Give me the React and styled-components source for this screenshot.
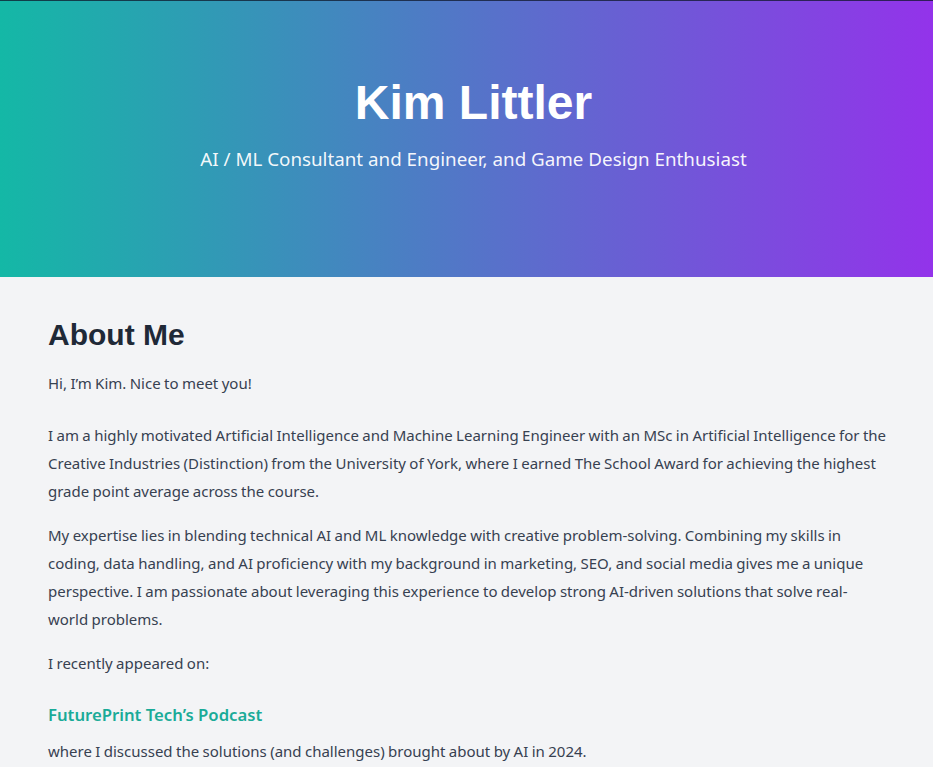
import React from 'react';
import styled, { createGlobalStyle } from 'styled-components';

const GlobalStyle = createGlobalStyle`
  html, body {
    margin: 0;
    padding: 0;
    background: #f3f4f6;
  }
  body {
    font-family: "Segoe UI", "Noto Sans", "Open Sans", sans-serif;
    color: #374151;
  }
  * { box-sizing: border-box; }
`

const Hero = styled.header`
  background: linear-gradient(90deg, #14b8a6 0%, #9333ea 100%);
  border-top: 1px solid rgba(15, 23, 42, 0.75);
  padding: 78px 10px 104px 24px;
  text-align: center;
  color: #fff;
`

const Name = styled.h1`
  margin: 0 0 18px;
  font-family: "Liberation Sans", Arial, sans-serif;
  font-size: 48px;
  line-height: 48px;
  font-weight: 700;
`

const Tagline = styled.p`
  margin: 0;
  font-size: 18.8px;
  line-height: 28px;
  color: rgba(255, 255, 255, 0.95);
`

const Section = styled.main`
  padding: 40px 46px 40px 48px;
`

const Heading = styled.h2`
  margin: 0 0 16px;
  font-family: "Liberation Sans", Arial, sans-serif;
  font-size: 30px;
  line-height: 36px;
  font-weight: 700;
  color: #1f2937;
`

const Para = styled.p`
  margin: 0 0 ${p => p.$gap || 16}px;
  font-size: 15px;
  line-height: 28px;
  word-spacing: -0.5px;
`

const LinkTitle = styled.a`
  display: block;
  margin: 0 0 8px;
  font-size: 16.7px;
  line-height: 28px;
  font-weight: 600;
  color: #1aab98;
  text-decoration: none;
`

const App = () => {
  return (
    <>
      <GlobalStyle />
      <Hero>
        <Name>Kim Littler</Name>
        <Tagline>AI / ML Consultant and Engineer, and Game Design Enthusiast</Tagline>
      </Hero>
      <Section>
        <Heading>About Me</Heading>
        <Para $gap={24}>Hi, I’m Kim. Nice to meet you!</Para>
        <Para>
          I am a highly motivated Artificial Intelligence and Machine Learning Engineer with an MSc in Artificial Intelligence for the Creative Industries (Distinction) from the University of York, where I earned The School Award for achieving the highest grade point average across the course.
        </Para>
        <Para>
          My expertise lies in blending technical AI and ML knowledge with creative problem-solving. Combining my skills in coding, data handling, and AI proficiency with my background in marketing, SEO, and social media gives me a unique perspective. I am passionate about leveraging this experience to develop strong AI-driven solutions that solve real-world problems.
        </Para>
        <Para $gap={24}>I recently appeared on:</Para>
        <LinkTitle href="#">FuturePrint Tech’s Podcast</LinkTitle>
        <Para>where I discussed the solutions (and challenges) brought about by AI in 2024.</Para>
      </Section>
    </>
  );
}

export default App;
